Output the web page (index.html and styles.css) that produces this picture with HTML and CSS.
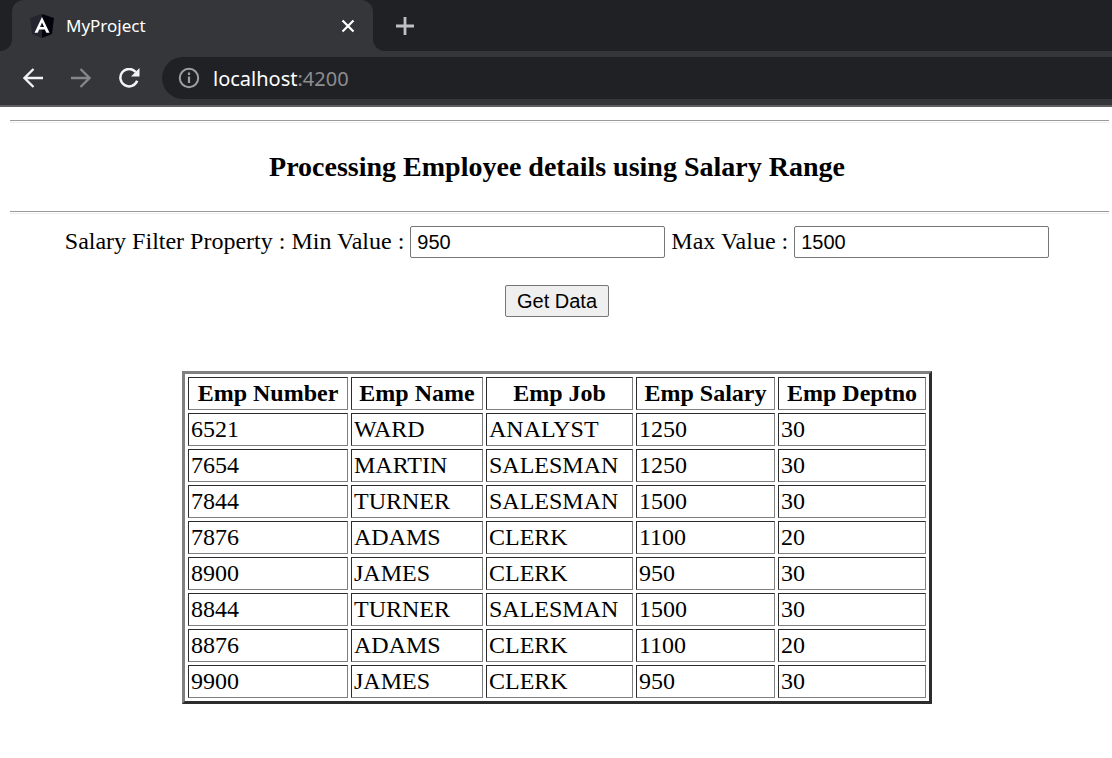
FILE: index.html
```html
<!DOCTYPE html>
<html lang="en">
<head>
<meta charset="utf-8">
<title>MyProject</title>
<link rel="stylesheet" href="styles.css">
</head>
<body>
<header class="browser">
  <div class="tab-strip">
    <span class="strip-edge"></span>
    <div class="tab">
      <svg class="logo" width="24" height="24" viewBox="0 0 24 24" aria-hidden="true">
        <path d="M12 0 0 4l2 16 10 4z" fill="#23252f"/>
        <path d="M12 0l12 4-2 16-10 4z" fill="#02040d"/>
        <path fill-rule="evenodd" d="M12 3 4.500 18.800h3.200L9.200 15.500h5.600l1.500 3.300h3.200zM12 8.500 14 13h-4z" fill="#fff"/>
      </svg>
      <span class="tab-title">MyProject</span>
      <button class="icon-button" aria-label="Close tab">
        <svg width="14" height="14" viewBox="0 0 14 14"><path d="M1.500 1.500l11 11M12.500 1.500l-11 11" stroke="#fff" stroke-width="2.200" fill="none"/></svg>
      </button>
    </div>
    <div class="strip-rest">
      <button class="icon-button" aria-label="New tab">
        <svg width="18" height="18" viewBox="0 0 18 18"><path d="M9 0v18M0 9h18" stroke="#bdc1c6" stroke-width="2.800" fill="none"/></svg>
      </button>
    </div>
  </div>
  <div class="toolbar">
    <nav class="nav-buttons">
      <button class="icon-button" aria-label="Back">
        <svg width="20" height="20" viewBox="0 0 20 20"><path d="M20 10H1.800M10.500 1 1.500 10l9 9" stroke="#f1f3f4" stroke-width="2.300" fill="none"/></svg>
      </button>
      <button class="icon-button" aria-label="Forward">
        <svg width="20" height="20" viewBox="0 0 20 20"><path d="M0 10h18.200M9.500 1l9 9-9 9" stroke="#85868a" stroke-width="2.300" fill="none"/></svg>
      </button>
      <button class="icon-button" aria-label="Reload">
        <svg width="22" height="20" viewBox="0 0 22 20"><path d="M16.700 4A8.700 8.700 0 1 0 18.200 12.800" stroke="#f1f3f4" stroke-width="2.500" fill="none"/><path d="M20.500 0v8.500H12z" fill="#f1f3f4"/></svg>
      </button>
    </nav>
    <div class="address">
      <svg width="22" height="22" viewBox="0 0 22 22" aria-hidden="true"><circle cx="11" cy="11" r="9.200" stroke="#9aa0a6" stroke-width="2" fill="none"/><path d="M11 9.500v6.500M11 5.500v2.500" stroke="#9aa0a6" stroke-width="2.200"/></svg>
      <span class="url">localhost<span class="port">:4200</span></span>
    </div>
  </div>
</header>
<main class="page">
  <hr class="rule">
  <h3 class="heading">Processing Employee details using Salary Range</h3>
  <hr class="rule">
  <form class="filter">
    <div>Salary Filter Property : <label for="min">Min Value :</label> <input class="field" id="min" type="text" value="950"> <label for="max">Max Value :</label> <input class="field" id="max" type="text" value="1500"></div>
    <button class="submit" type="button">Get Data</button>
  </form>
  <table class="employees">
    <colgroup><col class="col-number"><col class="col-name"><col class="col-job"><col class="col-salary"><col class="col-dept"></colgroup>
    <thead>
      <tr><th>Emp Number</th><th>Emp Name</th><th>Emp Job</th><th>Emp Salary</th><th>Emp Deptno</th></tr>
    </thead>
    <tbody>
      <tr><td>6521</td><td>WARD</td><td>ANALYST</td><td>1250</td><td>30</td></tr>
      <tr><td>7654</td><td>MARTIN</td><td>SALESMAN</td><td>1250</td><td>30</td></tr>
      <tr><td>7844</td><td>TURNER</td><td>SALESMAN</td><td>1500</td><td>30</td></tr>
      <tr><td>7876</td><td>ADAMS</td><td>CLERK</td><td>1100</td><td>20</td></tr>
      <tr><td>8900</td><td>JAMES</td><td>CLERK</td><td>950</td><td>30</td></tr>
      <tr><td>8844</td><td>TURNER</td><td>SALESMAN</td><td>1500</td><td>30</td></tr>
      <tr><td>8876</td><td>ADAMS</td><td>CLERK</td><td>1100</td><td>20</td></tr>
      <tr><td>9900</td><td>JAMES</td><td>CLERK</td><td>950</td><td>30</td></tr>
    </tbody>
  </table>
</main>
</body>
</html>
```
FILE: styles.css
```css
* { box-sizing: border-box; }
body {
  margin: 0;
  background: #fff;
  color: #000;
  font: 24px/27px "Liberation Serif", "Times New Roman", serif;
}
.browser {
  background: #35363a;
  border-bottom: 2px solid #5e5e63;
  font-family: "Noto Sans", "Segoe UI", sans-serif;
  color: #fff;
}
.icon-button {
  display: flex;
  padding: 0;
  border: 0;
  background: none;
}
.tab-strip { display: flex; height: 51px; }
.strip-edge {
  width: 12px;
  background: #202124;
  border-bottom-right-radius: 12px;
}
.tab {
  display: flex;
  align-items: center;
  width: 361px;
  padding: 0 18px;
  background: linear-gradient(#202124, #202124) top / 100% 12px no-repeat;
  position: relative;
  z-index: 0;
}
.tab::before {
  content: "";
  position: absolute;
  inset: 0;
  z-index: -1;
  background: #35363a;
  border-radius: 12px 12px 0 0;
}
.tab-title {
  flex: 1;
  padding-left: 12px;
  font-size: 17px;
}
.strip-rest {
  flex: 1;
  display: flex;
  align-items: center;
  padding-left: 23px;
  background: #202124;
  border-bottom-left-radius: 12px;
}
.toolbar {
  display: flex;
  align-items: center;
  gap: 21px;
  padding: 6px 0 6px 23px;
}
.nav-buttons { display: flex; gap: 28px; }
.address {
  flex: 1;
  display: flex;
  align-items: center;
  gap: 13px;
  height: 42px;
  padding-left: 16px;
  background: #202124;
  border-radius: 21px 0 0 21px;
}
.url { font-size: 20px; }
.port { color: #8c8d90; }
.page { padding: 13px 8px 0 10px; }
.rule {
  height: 3px;
  margin: 0 -5px 0 0;
  border: 0;
  border-top: 1px solid #9a9a9a;
  border-bottom: 1px solid #eee;
}
.heading {
  margin: 28px 0;
  font-size: 28px;
  line-height: 32px;
  text-align: center;
}
.filter {
  display: flex;
  flex-direction: column;
  align-items: center;
  gap: 27px;
  margin-top: 12px;
}
.field, .submit {
  height: 32px;
  border: 1px solid #767676;
  border-radius: 2px;
  font: 20px "Liberation Sans", Arial, sans-serif;
  color: #000;
}
.field { width: 255px; padding: 1px 6px; background: #fff; }
.submit { width: 104px; padding: 0; background: #efefef; }
.employees {
  width: 750px;
  margin: 54px auto;
  border: 3px solid;
  border-color: #808080 #2c2c2c #2c2c2c #808080;
  border-spacing: 3px;
  table-layout: fixed;
}
.employees th, .employees td {
  height: 33px;
  padding: 2px;
  border: 1px solid;
  border-color: #2c2c2c #808080 #808080 #2c2c2c;
}
.col-number { width: 160px; }
.col-name { width: 132px; }
.col-job { width: 147px; }
.col-salary { width: 139px; }
.col-dept { width: 148px; }
```
